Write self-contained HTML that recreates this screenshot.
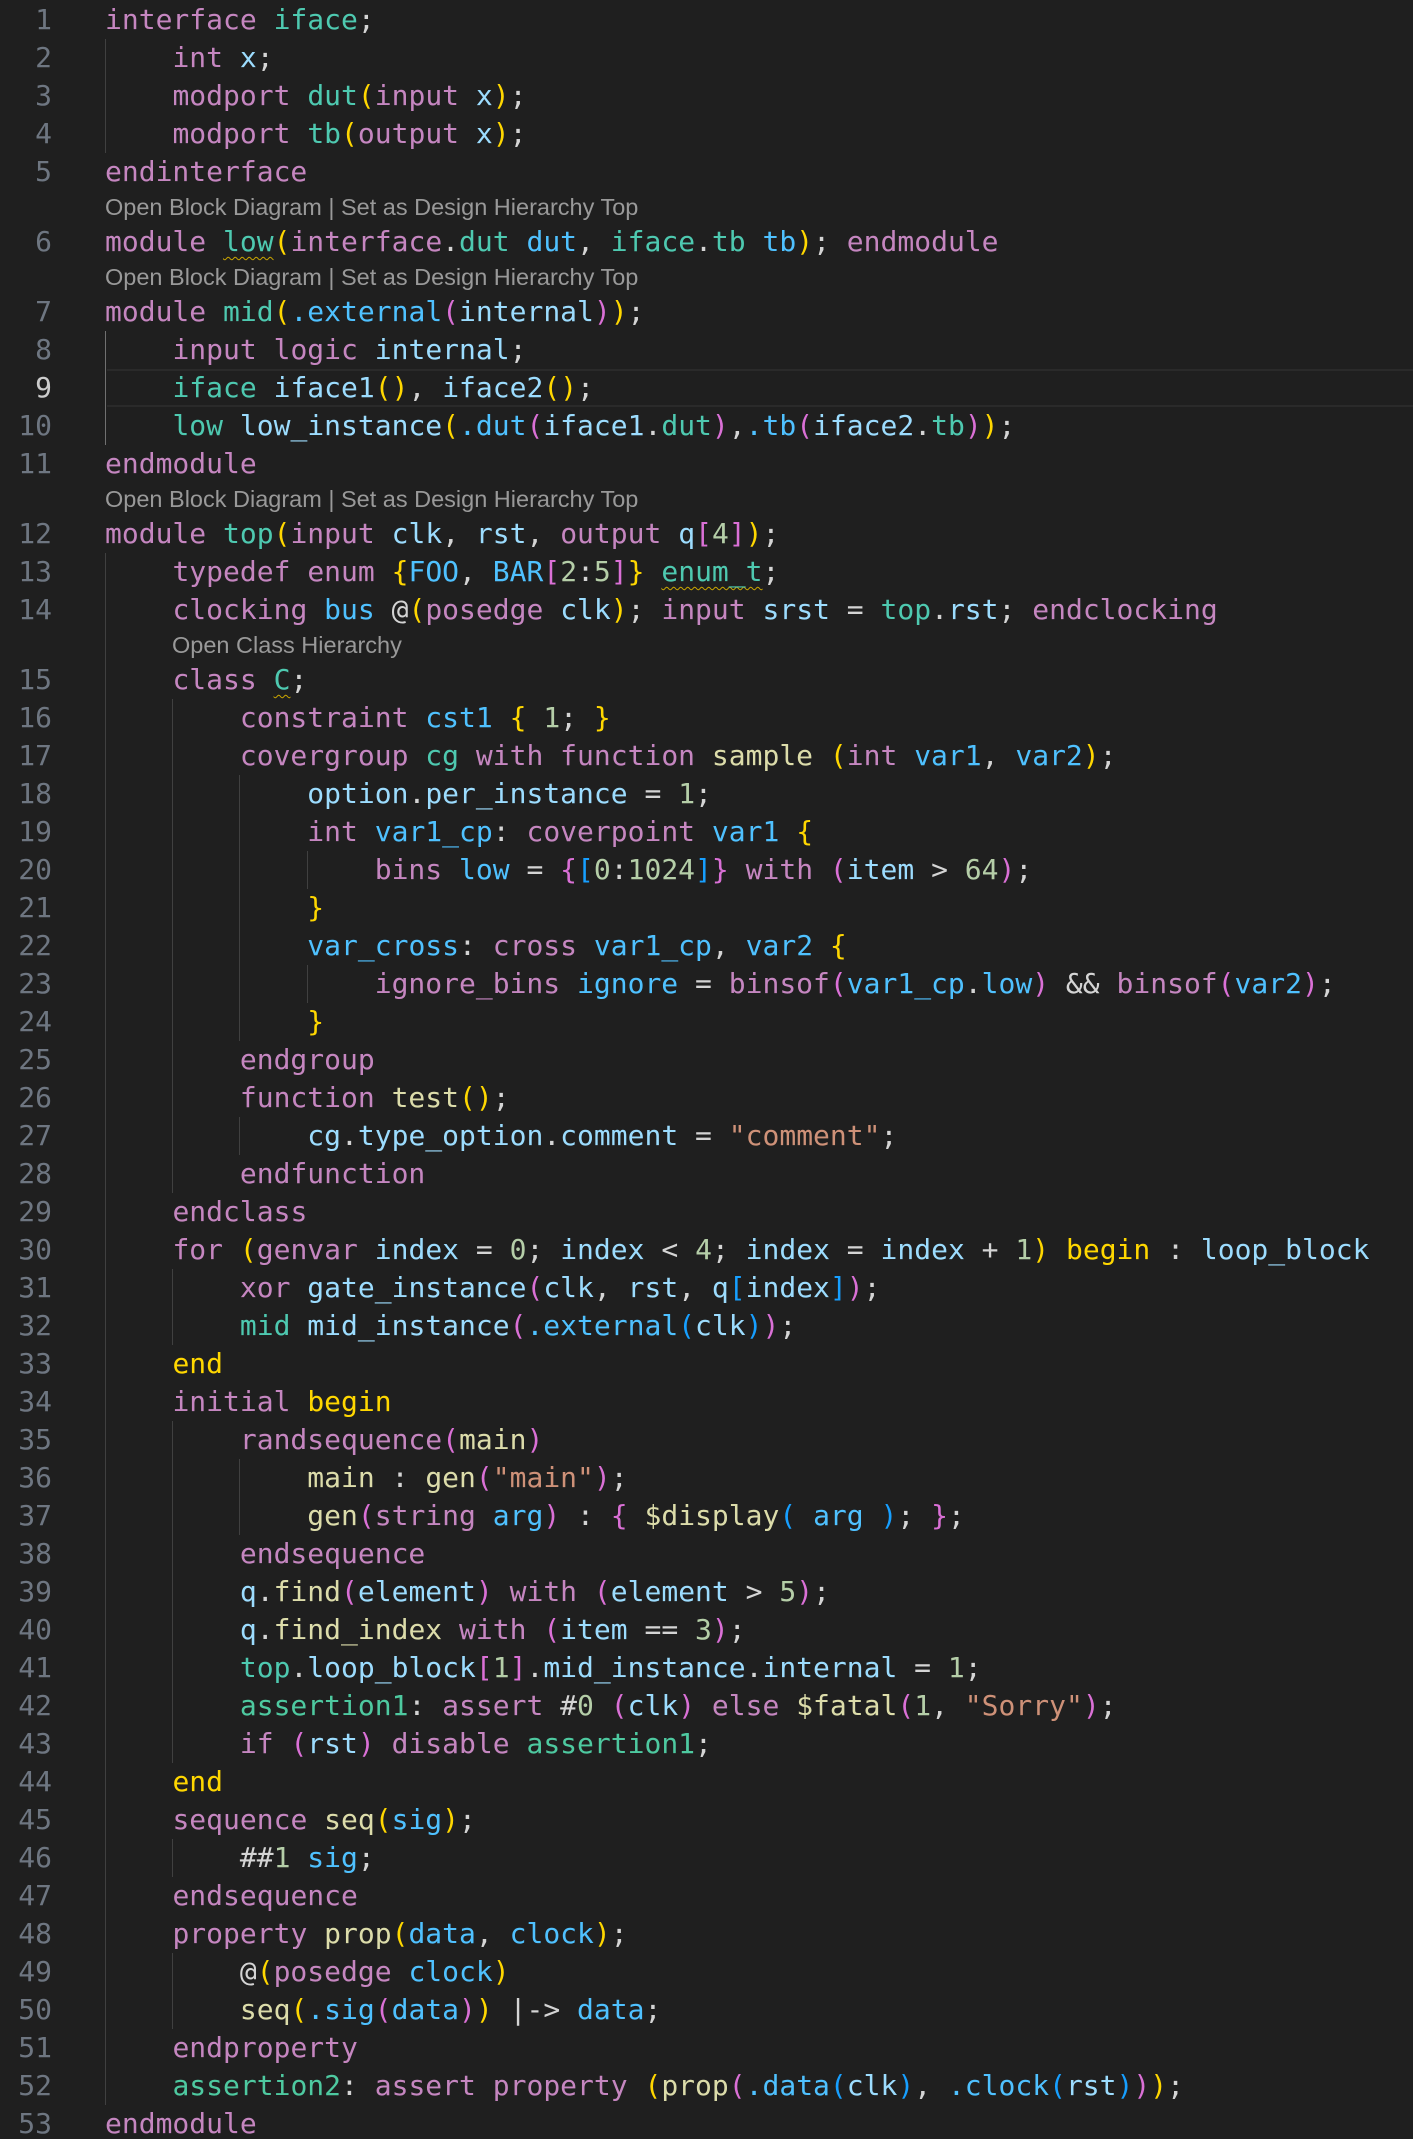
<!DOCTYPE html>
<html><head><meta charset="utf-8"><style>
html,body{margin:0;padding:0;background:#1f1f1f;width:1413px;height:2139px;overflow:hidden}
#ed{position:relative;padding-top:1px}
.r{position:relative;height:38px;line-height:38px;font-family:"DejaVu Sans Mono","Liberation Mono",monospace;font-size:28px;color:#d4d4d4;white-space:pre}
.cl{position:relative;height:32px;line-height:32px;font-family:"Liberation Sans",sans-serif;font-size:23.5px;color:#999999;white-space:pre}
.ln{position:absolute;left:0;width:52px;text-align:right;color:#6e7681}
.c{position:absolute;left:105px;top:0}
.act .ln{color:#cccccc}
.act::after{content:"";position:absolute;left:107px;right:0;top:0;bottom:0;border-top:2px solid #2a2a2a;border-bottom:2px solid #2a2a2a}
.k{color:#c586c0}.t{color:#4ec9b0}.v{color:#9cdcfe}.p{color:#4fc1ff}.f{color:#dcdcaa}.n{color:#b5cea8}.s{color:#ce9178}
.b1{color:#ffd700}.b2{color:#da70d6}.b3{color:#179fff}.y{color:#ffd700}.g{color:#4ec9a0}
.w{text-decoration:underline wavy #cca700;text-decoration-thickness:1px;text-underline-offset:5px}
.i1,.i2,.i3,.i4{background-repeat:no-repeat}
.i1{background-image:linear-gradient(#404040,#404040);background-position:105px 0;background-size:1px 100%}
.i2{background-image:linear-gradient(#404040,#404040),linear-gradient(#404040,#404040);background-position:105px 0,172px 0;background-size:1px 100%}
.i3{background-image:linear-gradient(#404040,#404040),linear-gradient(#404040,#404040),linear-gradient(#404040,#404040);background-position:105px 0,172px 0,239px 0;background-size:1px 100%}
.i4{background-image:linear-gradient(#404040,#404040),linear-gradient(#404040,#404040),linear-gradient(#404040,#404040),linear-gradient(#404040,#404040);background-position:105px 0,172px 0,239px 0,307px 0;background-size:1px 100%}
.a1{background-image:linear-gradient(#707070,#707070);background-position:105px 0;background-size:1px 100%;background-repeat:no-repeat}
</style></head><body><div id="ed">
<div class="r"><span class="ln">1</span><span class="c"><span class="k">interface</span> <span class="t">iface</span>;</span></div>
<div class="r i1"><span class="ln">2</span><span class="c">    <span class="k">int</span> <span class="v">x</span>;</span></div>
<div class="r i1"><span class="ln">3</span><span class="c">    <span class="k">modport</span> <span class="t">dut</span><span class="b1">(</span><span class="k">input</span> <span class="v">x</span><span class="b1">)</span>;</span></div>
<div class="r i1"><span class="ln">4</span><span class="c">    <span class="k">modport</span> <span class="t">tb</span><span class="b1">(</span><span class="k">output</span> <span class="v">x</span><span class="b1">)</span>;</span></div>
<div class="r"><span class="ln">5</span><span class="c"><span class="k">endinterface</span></span></div>
<div class="cl"><span class="c">Open Block Diagram | Set as Design Hierarchy Top</span></div>
<div class="r"><span class="ln">6</span><span class="c"><span class="k">module</span> <span class="t w">low</span><span class="b1">(</span><span class="k">interface</span>.<span class="t">dut</span> <span class="p">dut</span>, <span class="t">iface</span>.<span class="t">tb</span> <span class="p">tb</span><span class="b1">)</span>; <span class="k">endmodule</span></span></div>
<div class="cl"><span class="c">Open Block Diagram | Set as Design Hierarchy Top</span></div>
<div class="r"><span class="ln">7</span><span class="c"><span class="k">module</span> <span class="t">mid</span><span class="b1">(</span><span class="p">.external</span><span class="b2">(</span><span class="v">internal</span><span class="b2">)</span><span class="b1">)</span>;</span></div>
<div class="r a1"><span class="ln">8</span><span class="c">    <span class="k">input</span> <span class="k">logic</span> <span class="v">internal</span>;</span></div>
<div class="r a1 act"><span class="ln">9</span><span class="c">    <span class="t">iface</span> <span class="v">iface1</span><span class="b1">()</span>, <span class="v">iface2</span><span class="b1">()</span>;</span></div>
<div class="r a1"><span class="ln">10</span><span class="c">    <span class="t">low</span> <span class="v">low_instance</span><span class="b1">(</span><span class="p">.dut</span><span class="b2">(</span><span class="v">iface1</span>.<span class="t">dut</span><span class="b2">)</span>,<span class="p">.tb</span><span class="b2">(</span><span class="v">iface2</span>.<span class="t">tb</span><span class="b2">)</span><span class="b1">)</span>;</span></div>
<div class="r"><span class="ln">11</span><span class="c"><span class="k">endmodule</span></span></div>
<div class="cl"><span class="c">Open Block Diagram | Set as Design Hierarchy Top</span></div>
<div class="r"><span class="ln">12</span><span class="c"><span class="k">module</span> <span class="t">top</span><span class="b1">(</span><span class="k">input</span> <span class="v">clk</span>, <span class="v">rst</span>, <span class="k">output</span> <span class="v">q</span><span class="b2">[</span><span class="n">4</span><span class="b2">]</span><span class="b1">)</span>;</span></div>
<div class="r i1"><span class="ln">13</span><span class="c">    <span class="k">typedef</span> <span class="k">enum</span> <span class="b1">{</span><span class="p">FOO</span>, <span class="p">BAR</span><span class="b2">[</span><span class="n">2</span>:<span class="n">5</span><span class="b2">]</span><span class="b1">}</span> <span class="t w">enum_t</span>;</span></div>
<div class="r i1"><span class="ln">14</span><span class="c">    <span class="k">clocking</span> <span class="p">bus</span> @<span class="b1">(</span><span class="k">posedge</span> <span class="v">clk</span><span class="b1">)</span>; <span class="k">input</span> <span class="v">srst</span> = <span class="t">top</span>.<span class="v">rst</span>; <span class="k">endclocking</span></span></div>
<div class="cl i1"><span class="c" style="left:172px">Open Class Hierarchy</span></div>
<div class="r i1"><span class="ln">15</span><span class="c">    <span class="k">class</span> <span class="t w">C</span>;</span></div>
<div class="r i2"><span class="ln">16</span><span class="c">        <span class="k">constraint</span> <span class="p">cst1</span> <span class="b1">{</span> <span class="n">1</span>; <span class="b1">}</span></span></div>
<div class="r i2"><span class="ln">17</span><span class="c">        <span class="k">covergroup</span> <span class="t">cg</span> <span class="k">with</span> <span class="k">function</span> <span class="f">sample</span> <span class="b1">(</span><span class="k">int</span> <span class="p">var1</span>, <span class="p">var2</span><span class="b1">)</span>;</span></div>
<div class="r i3"><span class="ln">18</span><span class="c">            <span class="v">option</span>.<span class="v">per_instance</span> = <span class="n">1</span>;</span></div>
<div class="r i3"><span class="ln">19</span><span class="c">            <span class="k">int</span> <span class="p">var1_cp</span>: <span class="k">coverpoint</span> <span class="p">var1</span> <span class="b1">{</span></span></div>
<div class="r i4"><span class="ln">20</span><span class="c">                <span class="k">bins</span> <span class="p">low</span> = <span class="b2">{</span><span class="b3">[</span><span class="n">0</span>:<span class="n">1024</span><span class="b3">]</span><span class="b2">}</span> <span class="k">with</span> <span class="b2">(</span><span class="v">item</span> &gt; <span class="n">64</span><span class="b2">)</span>;</span></div>
<div class="r i3"><span class="ln">21</span><span class="c">            <span class="b1">}</span></span></div>
<div class="r i3"><span class="ln">22</span><span class="c">            <span class="p">var_cross</span>: <span class="k">cross</span> <span class="p">var1_cp</span>, <span class="p">var2</span> <span class="b1">{</span></span></div>
<div class="r i4"><span class="ln">23</span><span class="c">                <span class="k">ignore_bins</span> <span class="p">ignore</span> = <span class="k">binsof</span><span class="b2">(</span><span class="p">var1_cp</span>.<span class="p">low</span><span class="b2">)</span> &amp;&amp; <span class="k">binsof</span><span class="b2">(</span><span class="p">var2</span><span class="b2">)</span>;</span></div>
<div class="r i3"><span class="ln">24</span><span class="c">            <span class="b1">}</span></span></div>
<div class="r i2"><span class="ln">25</span><span class="c">        <span class="k">endgroup</span></span></div>
<div class="r i2"><span class="ln">26</span><span class="c">        <span class="k">function</span> <span class="f">test</span><span class="b1">()</span>;</span></div>
<div class="r i3"><span class="ln">27</span><span class="c">            <span class="v">cg</span>.<span class="v">type_option</span>.<span class="v">comment</span> = <span class="s">"comment"</span>;</span></div>
<div class="r i2"><span class="ln">28</span><span class="c">        <span class="k">endfunction</span></span></div>
<div class="r i1"><span class="ln">29</span><span class="c">    <span class="k">endclass</span></span></div>
<div class="r i1"><span class="ln">30</span><span class="c">    <span class="k">for</span> <span class="b1">(</span><span class="k">genvar</span> <span class="v">index</span> = <span class="n">0</span>; <span class="v">index</span> &lt; <span class="n">4</span>; <span class="v">index</span> = <span class="v">index</span> + <span class="n">1</span><span class="b1">)</span> <span class="y">begin</span> : <span class="v">loop_block</span></span></div>
<div class="r i2"><span class="ln">31</span><span class="c">        <span class="k">xor</span> <span class="v">gate_instance</span><span class="b2">(</span><span class="v">clk</span>, <span class="v">rst</span>, <span class="v">q</span><span class="b3">[</span><span class="v">index</span><span class="b3">]</span><span class="b2">)</span>;</span></div>
<div class="r i2"><span class="ln">32</span><span class="c">        <span class="t">mid</span> <span class="v">mid_instance</span><span class="b2">(</span><span class="p">.external</span><span class="b3">(</span><span class="v">clk</span><span class="b3">)</span><span class="b2">)</span>;</span></div>
<div class="r i1"><span class="ln">33</span><span class="c">    <span class="y">end</span></span></div>
<div class="r i1"><span class="ln">34</span><span class="c">    <span class="k">initial</span> <span class="y">begin</span></span></div>
<div class="r i2"><span class="ln">35</span><span class="c">        <span class="k">randsequence</span><span class="b2">(</span><span class="f">main</span><span class="b2">)</span></span></div>
<div class="r i3"><span class="ln">36</span><span class="c">            <span class="f">main</span> : <span class="f">gen</span><span class="b2">(</span><span class="s">"main"</span><span class="b2">)</span>;</span></div>
<div class="r i3"><span class="ln">37</span><span class="c">            <span class="f">gen</span><span class="b2">(</span><span class="k">string</span> <span class="p">arg</span><span class="b2">)</span> : <span class="b2">{</span> <span class="f">$display</span><span class="b3">(</span> <span class="p">arg</span> <span class="b3">)</span>; <span class="b2">}</span>;</span></div>
<div class="r i2"><span class="ln">38</span><span class="c">        <span class="k">endsequence</span></span></div>
<div class="r i2"><span class="ln">39</span><span class="c">        <span class="v">q</span>.<span class="f">find</span><span class="b2">(</span><span class="v">element</span><span class="b2">)</span> <span class="k">with</span> <span class="b2">(</span><span class="v">element</span> &gt; <span class="n">5</span><span class="b2">)</span>;</span></div>
<div class="r i2"><span class="ln">40</span><span class="c">        <span class="v">q</span>.<span class="f">find_index</span> <span class="k">with</span> <span class="b2">(</span><span class="v">item</span> == <span class="n">3</span><span class="b2">)</span>;</span></div>
<div class="r i2"><span class="ln">41</span><span class="c">        <span class="t">top</span>.<span class="v">loop_block</span><span class="b2">[</span><span class="n">1</span><span class="b2">]</span>.<span class="v">mid_instance</span>.<span class="v">internal</span> = <span class="n">1</span>;</span></div>
<div class="r i2"><span class="ln">42</span><span class="c">        <span class="g">assertion1</span>: <span class="k">assert</span> #<span class="n">0</span> <span class="b2">(</span><span class="v">clk</span><span class="b2">)</span> <span class="k">else</span> <span class="f">$fatal</span><span class="b2">(</span><span class="n">1</span>, <span class="s">"Sorry"</span><span class="b2">)</span>;</span></div>
<div class="r i2"><span class="ln">43</span><span class="c">        <span class="k">if</span> <span class="b2">(</span><span class="v">rst</span><span class="b2">)</span> <span class="k">disable</span> <span class="g">assertion1</span>;</span></div>
<div class="r i1"><span class="ln">44</span><span class="c">    <span class="y">end</span></span></div>
<div class="r i1"><span class="ln">45</span><span class="c">    <span class="k">sequence</span> <span class="f">seq</span><span class="b1">(</span><span class="p">sig</span><span class="b1">)</span>;</span></div>
<div class="r i2"><span class="ln">46</span><span class="c">        ##<span class="n">1</span> <span class="p">sig</span>;</span></div>
<div class="r i1"><span class="ln">47</span><span class="c">    <span class="k">endsequence</span></span></div>
<div class="r i1"><span class="ln">48</span><span class="c">    <span class="k">property</span> <span class="f">prop</span><span class="b1">(</span><span class="p">data</span>, <span class="p">clock</span><span class="b1">)</span>;</span></div>
<div class="r i2"><span class="ln">49</span><span class="c">        @<span class="b1">(</span><span class="k">posedge</span> <span class="p">clock</span><span class="b1">)</span></span></div>
<div class="r i2"><span class="ln">50</span><span class="c">        <span class="f">seq</span><span class="b1">(</span><span class="p">.sig</span><span class="b2">(</span><span class="p">data</span><span class="b2">)</span><span class="b1">)</span> |-&gt; <span class="p">data</span>;</span></div>
<div class="r i1"><span class="ln">51</span><span class="c">    <span class="k">endproperty</span></span></div>
<div class="r i1"><span class="ln">52</span><span class="c">    <span class="g">assertion2</span>: <span class="k">assert</span> <span class="k">property</span> <span class="b1">(</span><span class="f">prop</span><span class="b2">(</span><span class="p">.data</span><span class="b3">(</span><span class="v">clk</span><span class="b3">)</span>, <span class="p">.clock</span><span class="b3">(</span><span class="v">rst</span><span class="b3">)</span><span class="b2">)</span><span class="b1">)</span>;</span></div>
<div class="r"><span class="ln">53</span><span class="c"><span class="k">endmodule</span></span></div>
</div></body></html>
